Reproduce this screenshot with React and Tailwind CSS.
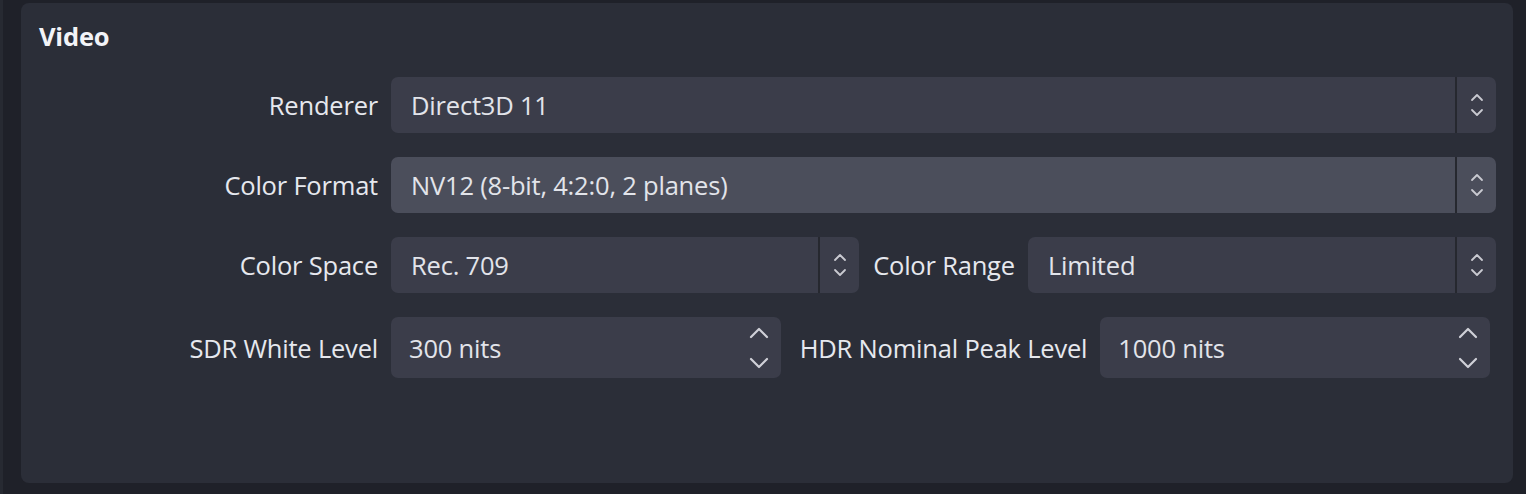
import React from "react";

const font = { fontFamily: '"Open Sans", "Noto Sans", sans-serif' };

function SmallChevrons() {
  return (
    <svg width="14" height="26" viewBox="0 0 14 26" fill="none" stroke="#c9cad1" strokeWidth="1.8" strokeLinecap="round" strokeLinejoin="round">
      <path d="M2 8 L7 3 L12 8" />
      <path d="M2 18 L7 23 L12 18" />
    </svg>
  );
}

function BigChevrons() {
  return (
    <svg width="20" height="42" viewBox="0 0 20 42" fill="none" stroke="#d0d1d8" strokeWidth="2.2" strokeLinecap="round" strokeLinejoin="round">
      <path d="M2 10 L10 2 L18 10" />
      <path d="M2 32 L10 40 L18 32" />
    </svg>
  );
}

function Combo({ value, hover, className = "" }) {
  const bg = hover ? "bg-[#4b4e5b]" : "bg-[#3b3d4a]";
  return (
    <div className={`flex h-[56px] ${className}`}>
      <div className={`flex-1 min-w-0 flex items-center pl-[20px] rounded-l-[7px] ${bg} text-[#e2e4ea]`}>
        {value}
      </div>
      <div className="w-[2px] bg-[#26282f]" />
      <div className={`w-[39px] flex items-center justify-center rounded-r-[7px] ${bg}`}>
        <SmallChevrons />
      </div>
    </div>
  );
}

function Spin({ value, className = "" }) {
  return (
    <div className={`flex items-center h-[61px] rounded-[7px] bg-[#3b3d4a] pl-[18px] pr-[12px] ${className}`}>
      <div className="flex-1 text-[#e2e4ea]">{value}</div>
      <BigChevrons />
    </div>
  );
}

function Label({ children, className = "" }) {
  return <div className={`text-[#e6e8ee] whitespace-nowrap ${className}`}>{children}</div>;
}

export default function App() {
  return (
    <div className="w-[1526px] h-[494px] bg-[#1f2129] border-l-[3px] border-[#272a32] pl-[18px] pt-[3px] pr-[13px] pb-[11px]" style={font}>
      <div className="h-full rounded-[8px] bg-[#2b2e38] pl-[18px] pr-[17px] pt-[17px] text-[25.5px] leading-[32px] tracking-[-0.2px]">
        <div className="font-bold text-[#f2f3f7]">Video</div>
        <div className="mt-[25px] flex flex-col gap-[24px]">
          <div className="flex items-center gap-[13px]">
            <Label className="w-[339px] text-right">Renderer</Label>
            <Combo value="Direct3D 11" className="flex-1" />
          </div>
          <div className="flex items-center gap-[13px]">
            <Label className="w-[339px] text-right">Color Format</Label>
            <Combo value="NV12 (8-bit, 4:2:0, 2 planes)" hover className="flex-1" />
          </div>
          <div className="flex items-center gap-[13px]">
            <Label className="w-[339px] text-right">Color Space</Label>
            <Combo value="Rec. 709" className="flex-1" />
            <Label className="ml-[1px]">Color Range</Label>
            <Combo value="Limited" className="flex-1" />
          </div>
          <div className="flex items-center gap-[13px] pr-[6px]">
            <Label className="w-[339px] text-right">SDR White Level</Label>
            <Spin value="300 nits" className="flex-1" />
            <Label className="ml-[6px]">HDR Nominal Peak Level</Label>
            <Spin value="1000 nits" className="flex-1" />
          </div>
        </div>
      </div>
    </div>
  );
}
